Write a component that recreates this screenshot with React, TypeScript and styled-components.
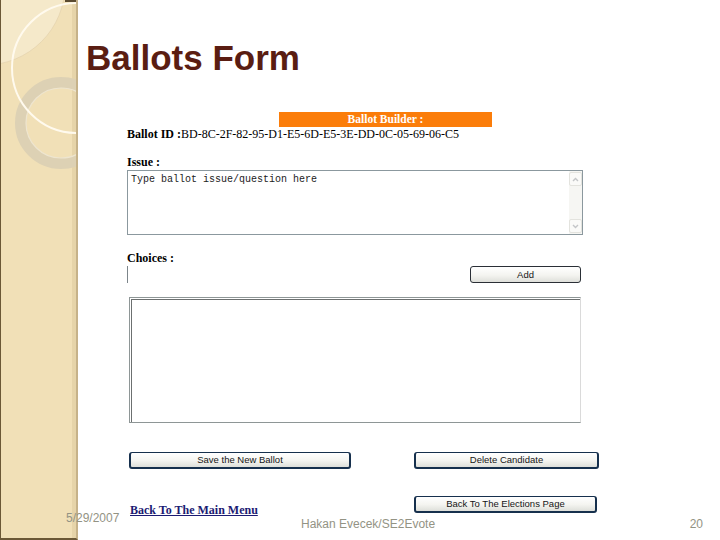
import React from "react";
import styled, { createGlobalStyle } from "styled-components";

const GlobalStyle = createGlobalStyle`
  html, body { margin: 0; padding: 0; background: #fff; }
  body { width: 720px; height: 540px; overflow: hidden; }
  * { box-sizing: border-box; }
`;

const Slide = styled.div`
  display: grid;
  grid-template-columns: 78px 1fr;
  grid-template-rows: 540px;
  width: 720px;
  height: 540px;
  overflow: hidden;
  background: #fff;
`;

const Sidebar = styled.aside`
  grid-column: 1;
  grid-row: 1;
  background: #f1e0b7;
  border-left: 1px solid #6b5836;
  border-right: 2px solid #c6b289;
  border-bottom: 2px solid #6b5836;
  box-shadow: inset -4px 0 0 #e6d4a9;
  overflow: hidden;
`;

const Decoration = styled.svg`
  display: block;
`;

const Main = styled.main`
  grid-column: 2;
  grid-row: 1;
  display: flex;
  flex-direction: column;
  align-items: flex-start;
  padding: 40px 0 0 8px;
`;

const Title = styled.h1`
  margin: 0;
  font: bold 35px/35px "Liberation Sans", Arial, sans-serif;
  color: #5a1d12;
`;

const Form = styled.section`
  display: flex;
  flex-direction: column;
  align-items: flex-start;
  margin: 37px 0 0 41px;
  font-family: "Liberation Serif", "Times New Roman", serif;
  font-size: 12px;
  line-height: 14px;
  color: #000;
`;

const Banner = styled.div`
  margin-left: 152px;
  width: 213px;
  height: 15px;
  background: #fb7d0a;
  color: #fff;
  font-weight: bold;
  font-size: 11.5px;
  line-height: 15px;
  text-align: center;
`;

const IdLine = styled.div`
  white-space: nowrap;
  color: #000;
`;

const Strong = styled.b`
  font-weight: bold;
`;

const FieldLabel = styled.div<{ $top: number }>`
  margin-top: ${(p) => p.$top}px;
  font-weight: bold;
`;

const TextBox = styled.div`
  display: flex;
  margin-top: 1px;
  width: 456px;
  height: 65px;
  border: 1px solid #8b989e;
  background: #fff;
`;

const TextContent = styled.div`
  flex: 1;
  padding: 3px 3px;
  font: 10px/12px "Liberation Mono", "Courier New", monospace;
  color: #222;
`;

const Scrollbar = styled.div`
  display: flex;
  flex-direction: column;
  justify-content: space-between;
  width: 13px;
  padding: 1px 0;
  background: #f6f6f3;
`;

const ScrollArrow = styled.div`
  display: flex;
  align-items: center;
  justify-content: center;
  height: 14px;
  border: 1px solid #e3e3de;
  border-radius: 2px;
  background: #fafaf8;
`;

const ChoiceRow = styled.div`
  display: flex;
  justify-content: space-between;
  margin-top: 1px;
  width: 454px;
  height: 17px;
`;

const ChoiceInput = styled.div`
  width: 200px;
  height: 17px;
  border-left: 1px solid #7c858a;
`;

const Button = styled.button<{ $w: number; $heavy?: boolean }>`
  width: ${(p) => p.$w}px;
  height: 17px;
  padding: 0;
  border: 1px solid ${(p) => (p.$heavy ? "#16304d" : "#2a2f36")};
  border-left-width: ${(p) => (p.$heavy ? 2 : 1)}px;
  border-right-width: ${(p) => (p.$heavy ? 2 : 1)}px;
  border-bottom-width: ${(p) => (p.$heavy ? 2 : 1)}px;
  border-radius: 3px;
  background: linear-gradient(#ffffff, #f4f4f0 55%, #dedfda);
  font: 9.5px/12px "Liberation Sans", Arial, sans-serif;
  color: #151515;
  cursor: pointer;
`;

const ListBox = styled.div`
  margin: 14px 0 0 2px;
  width: 452px;
  height: 126px;
  border: 1px solid #8e9696;
  border-right-color: #dadada;
  box-shadow: inset 1px 1px 0 #fff, inset 2px 2px 0 #6c7070;
  background: #fff;
`;

const ActionRow = styled.div`
  display: grid;
  grid-template-columns: 222px 185px;
  column-gap: 63px;
  margin-top: 29px;
  padding-left: 2px;
`;

const BottomRow = styled.div`
  display: grid;
  grid-template-columns: 284px 183px;
  align-items: start;
  margin-top: 27px;
  padding-left: 3px;
`;

const BackLink = styled.a`
  margin-top: 7px;
  font-weight: bold;
  color: #1b1a73;
  text-decoration: underline;
`;

const Footer = styled.footer`
  grid-column: 1 / -1;
  grid-row: 1;
  align-self: end;
  z-index: 1;
  display: grid;
  grid-template-columns: 235px 1fr auto;
  align-items: start;
  height: 29px;
  padding: 0 17px 0 66px;
  font: 12px/14px "Liberation Sans", Arial, sans-serif;
  color: #939384;
`;

const FooterText = styled.span<{ $drop: number }>`
  padding-top: ${(p) => p.$drop}px;
`;

const Chevron = ({ up }: { up?: boolean }) => (
  <svg width="7" height="5" viewBox="0 0 7 5">
    <path
      d={up ? "M1 4 L3.5 1.5 L6 4" : "M1 1 L3.5 3.5 L6 1"}
      fill="none"
      stroke="#c4c6c8"
      strokeWidth="1.4"
    />
  </svg>
);

export default function App() {
  return (
    <>
      <GlobalStyle />
      <Slide>
        <Sidebar>
          <Decoration width="75" height="200" viewBox="1 0 75 200">
            <circle cx="-15" cy="-15" r="80" fill="#f8efd8" opacity="0.6" stroke="#d6c5a2" strokeWidth="0.6" />
            <circle cx="61" cy="123" r="40.5" fill="none" stroke="#ddd1b4" strokeWidth="11" />
            <circle cx="61" cy="123" r="35" fill="none" stroke="#eee5cf" strokeWidth="1.2" />
            <circle cx="77" cy="68" r="65" fill="none" stroke="#fffaee" strokeWidth="2" />
            <rect x="65" y="0" width="13" height="2" fill="#5a4a30" />
          </Decoration>
        </Sidebar>
        <Main>
          <Title>Ballots Form</Title>
          <Form>
            <Banner>Ballot Builder :</Banner>
            <IdLine>
              <Strong>Ballot ID :</Strong>BD-8C-2F-82-95-D1-E5-6D-E5-3E-DD-0C-05-69-06-C5
            </IdLine>
            <FieldLabel $top={14}>Issue :</FieldLabel>
            <TextBox>
              <TextContent>Type ballot issue/question here</TextContent>
              <Scrollbar>
                <ScrollArrow>
                  <Chevron up />
                </ScrollArrow>
                <ScrollArrow>
                  <Chevron />
                </ScrollArrow>
              </Scrollbar>
            </TextBox>
            <FieldLabel $top={16}>Choices :</FieldLabel>
            <ChoiceRow>
              <ChoiceInput />
              <Button $w={111}>Add</Button>
            </ChoiceRow>
            <ListBox />
            <ActionRow>
              <Button $w={222} $heavy>Save the New Ballot</Button>
              <Button $w={185} $heavy>Delete Candidate</Button>
            </ActionRow>
            <BottomRow>
              <BackLink href="#">Back To The Main Menu</BackLink>
              <Button $w={183} $heavy>Back To The Elections Page</Button>
            </BottomRow>
          </Form>
        </Main>
        <Footer>
          <FooterText $drop={0}>5/29/2007</FooterText>
          <FooterText $drop={6}>Hakan Evecek/SE2Evote</FooterText>
          <FooterText $drop={6}>20</FooterText>
        </Footer>
      </Slide>
    </>
  );
}
